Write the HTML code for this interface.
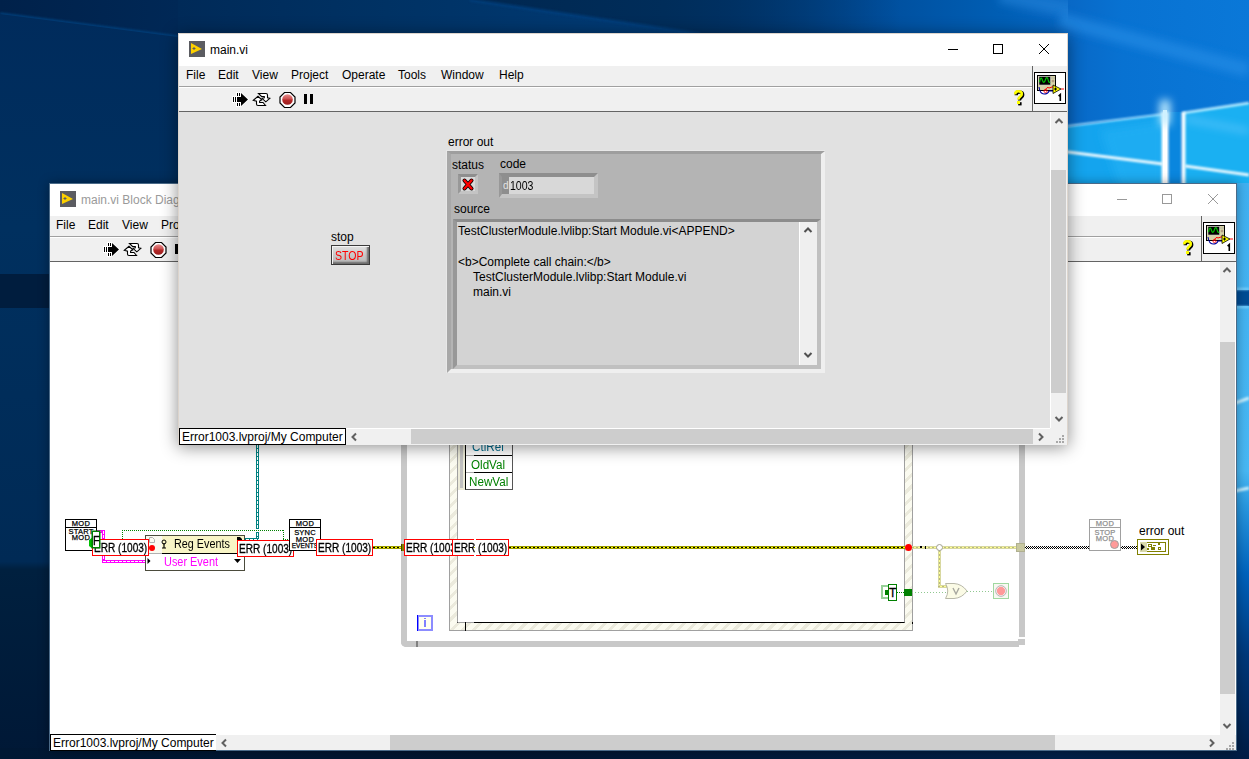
<!DOCTYPE html>
<html><head><meta charset="utf-8">
<style>
html,body{margin:0;padding:0}
body{width:1249px;height:759px;overflow:hidden;position:relative;font-family:"Liberation Sans",sans-serif;font-size:12px;color:#000;background:#002a58}
.a{position:absolute}
.t{position:absolute;white-space:nowrap;line-height:1;font-size:12px}
svg{position:absolute;overflow:visible}
</style></head><body>
<svg style="left:0;top:0" width="1249" height="759">
<defs>
<linearGradient id="dk0" x1="0" y1="0" x2="1249" y2="0" gradientUnits="userSpaceOnUse">
<stop offset="0" stop-color="#002550"/><stop offset=".25" stop-color="#002a58"/><stop offset=".58" stop-color="#003a78"/><stop offset=".7" stop-color="#004e9c"/><stop offset=".8" stop-color="#005eb4"/><stop offset=".86" stop-color="#0868c6"/><stop offset="1" stop-color="#0a72d4"/>
</linearGradient>
<linearGradient id="rcol" x1="0" y1="183" x2="0" y2="759" gradientUnits="userSpaceOnUse">
<stop offset="0" stop-color="#40b0f0"/><stop offset=".5" stop-color="#48b8f4"/><stop offset=".56" stop-color="#2898e0"/><stop offset=".68" stop-color="#0062bc"/><stop offset=".82" stop-color="#00387a"/><stop offset="1" stop-color="#001c44"/>
</linearGradient>
<linearGradient id="lcol" x1="0" y1="0" x2="0" y2="759" gradientUnits="userSpaceOnUse">
<stop offset="0" stop-color="#002b5c"/><stop offset=".3" stop-color="#00305f"/><stop offset=".74" stop-color="#002a55"/><stop offset=".75" stop-color="#00203f"/><stop offset="1" stop-color="#001836"/>
</linearGradient>
<linearGradient id="bot" x1="0" y1="0" x2="1249" y2="0" gradientUnits="userSpaceOnUse">
<stop offset="0" stop-color="#001834"/><stop offset=".4" stop-color="#001530"/><stop offset=".85" stop-color="#002048"/><stop offset="1" stop-color="#001c40"/>
</linearGradient>
<filter id="bl1" filterUnits="userSpaceOnUse" x="0" y="0" width="1249" height="759"><feGaussianBlur stdDeviation="1.2"/></filter>
<filter id="bl3" filterUnits="userSpaceOnUse" x="0" y="0" width="1249" height="759"><feGaussianBlur stdDeviation="4"/></filter>
<linearGradient id="tb0" x1="0" y1="0" x2="178" y2="0" gradientUnits="userSpaceOnUse"><stop offset="0" stop-color="#00214a"/><stop offset="1" stop-color="#002856"/></linearGradient>
<linearGradient id="tb1" x1="178" y1="0" x2="700" y2="0" gradientUnits="userSpaceOnUse"><stop offset="0" stop-color="#002a58"/><stop offset=".4" stop-color="#003264"/><stop offset="1" stop-color="#003c78"/></linearGradient>
<linearGradient id="tb2" x1="470" y1="0" x2="900" y2="0" gradientUnits="userSpaceOnUse"><stop offset="0" stop-color="#002750"/><stop offset=".45" stop-color="#002d5a"/><stop offset="1" stop-color="#002d5a" stop-opacity="0"/></linearGradient>
<linearGradient id="trr" x1="1068" y1="0" x2="1249" y2="0" gradientUnits="userSpaceOnUse"><stop offset="0" stop-color="#0868c6"/><stop offset=".3" stop-color="#0872d2"/><stop offset="1" stop-color="#0a78d8"/></linearGradient>
</defs>
<rect width="1249" height="759" fill="url(#dk0)"/>
<!-- top band -->
<path d="M178 0 H470 L700 34 H178 Z" fill="url(#tb1)"/>
<path d="M470 0 L700 34 H900 V0 Z" fill="url(#tb2)"/>
<path d="M470 0 L700 34" stroke="#00407e" stroke-width="3" filter="url(#bl1)" opacity=".8"/>
<path d="M1000 -5 L1249 45" stroke="#2a8ae0" stroke-width="16" filter="url(#bl3)" opacity=".5"/>
<!-- top-left ridge -->
<path d="M0 0 H178 V37 L0 14 Z" fill="url(#tb0)"/>
<path d="M0 14 L178 37" fill="none" stroke="#00407c" stroke-width="3" filter="url(#bl1)"/>
<!-- left column -->
<path d="M0 14 L178 37 V759 H0 Z" fill="url(#lcol)"/>

<rect x="0" y="274" width="49" height="34" fill="#001d3e"/>
<!-- bottom -->
<rect x="0" y="748" width="1249" height="11" fill="url(#bot)"/>
<!-- top right: windows logo area -->
<path d="M1068 0 H1249 V183 H1068 Z" fill="url(#trr)"/>

<path d="M1060 20 L1249 70" stroke="#2a90e8" stroke-width="14" filter="url(#bl3)" opacity=".6"/>
<!-- left pane -->
<path d="M1060 128 L1165 114 L1165 190 L1060 190 Z" fill="#14a4ee"/>
<path d="M1100 130 L1165 120 L1165 190 L1120 190 Z" fill="#20b0f4" opacity=".7" filter="url(#bl3)"/>
<path d="M1060 127 L1165 114" stroke="#a0e0ff" stroke-width="2" filter="url(#bl1)"/>
<path d="M1060 151 L1163 164" stroke="#e8f8ff" stroke-width="3" filter="url(#bl1)"/>
<!-- gap -->
<rect x="1169" y="112" width="12" height="80" fill="#0a86de"/>
<!-- right pane -->
<path d="M1183 113 L1249 103 L1249 190 L1183 190 Z" fill="#1ab0f2"/>
<path d="M1183 113 L1249 103" stroke="#b8ecff" stroke-width="2.5" filter="url(#bl1)"/>
<path d="M1185 119 L1249 131" stroke="#70ccff" stroke-width="3" filter="url(#bl3)"/>
<path d="M1185 166 L1249 175" stroke="#e8f8ff" stroke-width="3" filter="url(#bl1)"/>
<!-- beams -->
<path d="M1165 112 V192" stroke="#f4fcff" stroke-width="7" filter="url(#bl1)"/>
<path d="M1165 110 V192" stroke="#ffffff" stroke-width="4"/>
<path d="M1183.5 112 V192" stroke="#f4fcff" stroke-width="4" filter="url(#bl1)"/>
<path d="M1165 100 V125" stroke="#c0ecff" stroke-width="10" filter="url(#bl3)"/>
<!-- right column -->
<rect x="1230" y="183" width="19" height="576" fill="url(#rcol)"/>
<rect x="1230" y="290" width="19" height="16" fill="#004c94"/>
<path d="M1230 289 H1249" stroke="#80d4ff" stroke-width="2" filter="url(#bl1)"/>
<path d="M1230 307 H1249" stroke="#80d4ff" stroke-width="2" filter="url(#bl1)"/>
<path d="M1230 405 L1249 398" stroke="#c8f0ff" stroke-width="3" filter="url(#bl1)"/>
<path d="M1230 492 L1249 488" stroke="#c8f0ff" stroke-width="3" filter="url(#bl1)"/>
</svg>
<!-- ================= BLOCK DIAGRAM WINDOW ================= -->
<div class="a" style="left:49px;top:183px;width:1188px;height:568px;background:#fff;box-shadow:0 0 10px rgba(0,0,0,.35);border:1px solid #4a6a88;box-sizing:border-box"></div>
<svg style="left:60px;top:191px" width="16" height="16"><rect width="16" height="16" fill="#5b5c61"/><path d="M2 2 L13 8 L2 13 Z" fill="#fcd000"/><path d="M5 6v3M3.5 7.5h3" stroke="#5b5c61" stroke-width="1"/></svg>
<div class="t" style="left:81px;top:194px;color:#9a9a9a">main.vi Block Diagram</div>
<div class="a" style="left:1117px;top:199px;width:10px;height:1px;background:#999"></div>
<div class="a" style="left:1162px;top:194px;width:10px;height:10px;border:1px solid #999;box-sizing:border-box"></div>
<svg style="left:1208px;top:194px" width="10" height="10"><path d="M0 0L10 10M10 0L0 10" stroke="#999" stroke-width="1"/></svg>
<div class="a" style="left:50px;top:216px;width:1186px;height:20px;background:#f0f0f0"></div>
<div class="t" style="left:56px;top:219px">File</div>
<div class="t" style="left:88px;top:219px">Edit</div>
<div class="t" style="left:122px;top:219px">View</div>
<div class="t" style="left:161px;top:219px">Project</div>
<div class="a" style="left:50px;top:236px;width:1151px;height:1px;background:#a0a0a0"></div>
<div class="a" style="left:50px;top:237px;width:1151px;height:24px;background:#f0f0f0;border-top:1px solid #fff;box-sizing:border-box"></div>
<div class="a" style="left:50px;top:261px;width:1186px;height:1px;background:#646464"></div>
<div class="a" style="left:1201px;top:216px;width:35px;height:45px;background:#f0f0f0;border-left:1px solid #646464;box-sizing:border-box"></div>
<svg style="left:0;top:0" width="1" height="1"><defs><linearGradient id="rgb" x1="0" y1="0" x2="0" y2="1"><stop offset="0" stop-color="#e89090"/><stop offset=".45" stop-color="#cc5050"/><stop offset=".55" stop-color="#b52828"/><stop offset="1" stop-color="#9a2020"/></linearGradient></defs>
<g transform="translate(-129,150)">
<path d="M232 96h5v7h-5zM236 92h5v15h-5z" fill="#fff"/>
<path d="M240 91.5L249.5 99.5L240 107.5z" fill="#fff"/>
<g fill="#000"><rect x="233" y="97" width="1" height="5"/><rect x="235" y="97" width="1" height="5"/>
<rect x="237" y="93" width="1" height="3"/><rect x="239" y="93" width="1" height="3"/>
<rect x="237" y="103" width="1" height="3"/><rect x="239" y="103" width="1" height="3"/>
<rect x="237" y="97" width="4" height="5"/>
<path d="M241 93L248 99.5L241 106z"/></g>
<path d="M258.5 93.5L266 93.5Q267.5 93.5 267.5 95L267.5 97.8L269.8 98.3L265.8 101.8L262 98.3L264.3 97.8L264.3 96.5L261.5 96.5Z" fill="#fff" stroke="#000" stroke-width="1.1" stroke-linejoin="miter"/>
<path d="M265.5 105.5L258 105.5Q256.5 105.5 256.5 104L256.5 101.2L253.3 100.3L258 96.3L261.8 99.8L259.6 101L259.6 102.5L263 102.5Z" fill="#fff" stroke="#000" stroke-width="1.1" stroke-linejoin="miter"/>
<path d="M284.5 92.5h6l4.5 4.5v6l-4.5 4.5h-6l-4.5-4.5v-6z" fill="#fff" stroke="#000" stroke-width="1.2"/>
<circle cx="287.5" cy="99.5" r="5.3" fill="url(#rgb)"/>
<rect x="304" y="94" width="3" height="10" fill="#000"/><rect x="310" y="94" width="3" height="10" fill="#000"/>
</g></svg><svg style="left:1182px;top:240px" width="12" height="16"><g transform="translate(1,1)"><path d="M2.2 4.2 Q2.2 1.2 5.5 1.2 Q8.8 1.2 8.8 4 Q8.8 5.6 6.8 7 Q5.5 8 5.5 9.5" fill="none" stroke="#000" stroke-width="3.2"/><rect x="4.2" y="11.2" width="3.4" height="3.2" fill="#000"/></g><path d="M2.2 4.2 Q2.2 1.2 5.5 1.2 Q8.8 1.2 8.8 4 Q8.8 5.6 6.8 7 Q5.5 8 5.5 9.5" fill="none" stroke="#e8e800" stroke-width="2.6"/><path d="M2.2 4.2 Q2.2 1.2 5.5 1.2 Q8.8 1.2 8.8 4 Q8.8 5.6 6.8 7 Q5.5 8 5.5 9.5" fill="none" stroke="#ffff00" stroke-width="1.8"/><rect x="4" y="11" width="3" height="3" fill="#ffff00"/></svg><svg style="left:1203px;top:222px" width="32" height="32">
<rect x="0.5" y="0.5" width="31" height="31" fill="#fff" stroke="#000" stroke-width="1"/>
<rect x="3.5" y="3.5" width="18" height="15" fill="#d6d3a8" stroke="#000" stroke-width="1"/>
<rect x="5" y="4.5" width="11.5" height="8.5" fill="#000" stroke="#c8c8c8" stroke-width=".6"/>
<path d="M5.5 10 Q7 3 8.5 8.5 Q10 12.5 11.5 7.5 Q13 3 14.5 9 Q15 11 16 10" fill="none" stroke="#00c000" stroke-width="1.2"/>
<circle cx="19" cy="9" r="1" fill="#e0b080" stroke="#777" stroke-width=".5"/><path d="M18 5v2M20 5v2" stroke="#999" stroke-width=".6"/>
<path d="M5 15 Q6 22 10 22 Q14 22 15 19 L20 19" fill="none" stroke="#0000a0" stroke-width="1.1"/>
<path d="M11 19 Q13 14 15 16 L18 15 L20 14.5" fill="none" stroke="#ff0000" stroke-width="1"/>
<circle cx="11.5" cy="19" r="1.6" fill="none" stroke="#ff0000" stroke-width=".8"/>
<path d="M19 13 L27 17 L19 21.5 Z" fill="#ffff00" stroke="#000" stroke-width=".8"/>
<path d="M27 17h3" stroke="#ff0000" stroke-width="1"/>
<path d="M21.5 15.5v3M20 17h3" stroke="#000" stroke-width="1"/>
<path d="M24.6 24.2 L26.3 22.6 L26.3 29" fill="none" stroke="#000" stroke-width="1.6"/>
</svg>
<div class="a" style="left:1220px;top:262px;width:15px;height:473px;background:#f0f0f0"></div>
<div class="a" style="left:1220px;top:342px;width:15px;height:352px;background:#cdcdcd"></div>
<div class="a" style="left:50px;top:735px;width:1186px;height:15px;background:#f0f0f0"></div>
<div class="a" style="left:390px;top:735px;width:665px;height:15px;background:#cdcdcd"></div>
<div class="a" style="left:50px;top:734px;width:166px;height:17px;background:#fff;border:1px solid #000;border-right:none;box-sizing:border-box"></div>
<div class="t" style="left:53px;top:737px">Error1003.lvproj/My Computer</div>
<!-- ===== BD content ===== -->
<!-- while loop -->
<div class="a" style="left:401px;top:440px;width:6px;height:207px;background:#c8c8c8;border-bottom-left-radius:5px"></div>
<div class="a" style="left:401px;top:641px;width:618px;height:6px;background:#c8c8c8;border-bottom-left-radius:5px"></div>
<div class="a" style="left:1018px;top:639px;width:7px;height:6px;background:#c8c8c8"></div>
<div class="a" style="left:1019px;top:440px;width:6px;height:197px;background:#c8c8c8"></div>
<div class="a" style="left:416px;top:641px;width:2px;height:6px;background:#808080"></div>
<!-- iteration terminal -->
<div class="a" style="left:417px;top:615px;width:16px;height:16px;box-sizing:border-box;background:#fffff0;border:2px solid #8c8cff;box-shadow:inset 0 0 0 0 #000"></div>
<div class="a" style="left:417px;top:615px;width:1px;height:16px;background:#0000ff"></div>
<div class="a" style="left:424px;top:620px;width:2px;height:7px;background:#8080ff"></div>
<div class="a" style="left:424px;top:618px;width:2px;height:1px;background:#8080ff"></div>
<!-- event structure frame -->
<div class="a" style="left:449px;top:440px;width:464px;height:191px;box-sizing:border-box;border:1px solid #a0a0a0;background:repeating-linear-gradient(135deg,#fbfbf0 0px,#fbfbf0 5px,#ebeadc 5px,#ebeadc 8px)"></div>
<div class="a" style="left:457px;top:440px;width:448px;height:183px;box-sizing:border-box;background:#fff;border-right:1px solid #a0a0a0;border-bottom:1px solid #000;border-left:1px solid #a0a0a0"></div>
<div class="a" style="left:458px;top:622px;width:16px;height:1px;background:#a0a0a0"></div>
<div class="a" style="left:465px;top:622px;width:1px;height:9px;background:#000"></div>
<div class="a" style="left:912px;top:622px;width:1px;height:2px;background:#000"></div>
<!-- event data node -->
<div class="a" style="left:458px;top:440px;width:8px;height:50px;background:#ecebd8"></div>
<div class="a" style="left:460px;top:440px;width:3px;height:48px;background:#c0c0c0"></div>
<div class="a" style="left:465px;top:440px;width:48px;height:50px;box-sizing:border-box;background:#fff;border-left:1px solid #000;border-right:1px solid #555;border-bottom:1px solid #555"></div>
<div class="a" style="left:466px;top:455px;width:8px;height:1px;background:#aaa"></div>
<div class="a" style="left:474px;top:455px;width:38px;height:1px;background:#000"></div>
<div class="a" style="left:466px;top:472px;width:8px;height:1px;background:#aaa"></div>
<div class="a" style="left:474px;top:472px;width:38px;height:1px;background:#000"></div>
<div class="t" style="left:472px;top:441px;color:#006a8a;transform:scaleX(.97);transform-origin:0 0">CtlRef</div>
<div class="t" style="left:471px;top:459px;color:#008000;transform:scaleX(.97);transform-origin:0 0">OldVal</div>
<div class="t" style="left:469px;top:476px;color:#008000;transform:scaleX(.97);transform-origin:0 0">NewVal</div>

<!-- wires -->
<!-- teal refnum wire -->
<div class="a" style="left:256px;top:440px;width:3px;height:89px;background:repeating-linear-gradient(180deg,#008080 0,#008080 1px,#fff 1px,#fff 4px);border-left:1px solid #008080;border-right:1px solid #008080;box-sizing:border-box"></div>
<div class="a" style="left:256px;top:532px;width:3px;height:8px;background:repeating-linear-gradient(180deg,#008080 0,#008080 1px,#fff 1px,#fff 4px);border-left:1px solid #008080;border-right:1px solid #008080;box-sizing:border-box"></div>
<div class="a" style="left:245px;top:538px;width:14px;height:3px;background:repeating-linear-gradient(90deg,#008080 0,#008080 1px,#fff 1px,#fff 4px);border-top:1px solid #008080;border-bottom:1px solid #008080;box-sizing:border-box"></div>
<!-- green dotted boolean wire -->
<div class="a" style="left:122px;top:530px;width:162px;height:1px;background:repeating-linear-gradient(90deg,#008000 0,#008000 1px,transparent 1px,transparent 2px)"></div>
<div class="a" style="left:122px;top:530px;width:1px;height:9px;background:repeating-linear-gradient(180deg,#008000 0,#008000 1px,transparent 1px,transparent 2px)"></div>
<div class="a" style="left:283px;top:530px;width:1px;height:10px;background:repeating-linear-gradient(180deg,#008000 0,#008000 1px,transparent 1px,transparent 2px)"></div>
<div class="a" style="left:283px;top:539px;width:6px;height:1px;background:repeating-linear-gradient(90deg,#008000 0,#008000 1px,transparent 1px,transparent 2px)"></div>
<!-- magenta user event wire -->
<div class="a" style="left:102px;top:555px;width:3px;height:8px;background:repeating-linear-gradient(180deg,#ff00ff 0,#ff00ff 1px,#fff 1px,#fff 4px);border-left:1px solid #ff00ff;border-right:1px solid #ff00ff;box-sizing:border-box"></div>
<div class="a" style="left:102px;top:560px;width:44px;height:3px;background:repeating-linear-gradient(90deg,#ff00ff 0,#ff00ff 1px,#fff 1px,#fff 4px);border-top:1px solid #ff00ff;border-bottom:1px solid #ff00ff;box-sizing:border-box"></div>
<!-- error wire -->
<div class="a" style="left:373px;top:546px;width:29px;height:3px;box-sizing:border-box;border-top:1px solid #9a9a00;border-bottom:1px solid #9a9a00;background:repeating-linear-gradient(90deg,#000 0,#000 2px,#ffff00 2px,#ffff00 4px)"></div>
<div class="a" style="left:401px;top:544px;width:3px;height:7px;background:#808000;border-left:1px solid #404000;box-sizing:border-box"></div>
<div class="a" style="left:509px;top:546px;width:396px;height:3px;box-sizing:border-box;border-top:1px solid #9a9a00;border-bottom:1px solid #9a9a00;background:repeating-linear-gradient(90deg,#000 0,#000 2px,#ffff00 2px,#ffff00 4px)"></div>
<div class="a" style="left:905px;top:544px;width:7px;height:7px;background:#ff0000;border-radius:50%"></div>
<div class="a" style="left:912px;top:546px;width:104px;height:3px;box-sizing:border-box;border-top:1px solid #d8d8a0;border-bottom:1px solid #d8d8a0;background:repeating-linear-gradient(90deg,#b8b880 0,#b8b880 2px,#ffff90 2px,#ffff90 4px)"></div>
<div class="a" style="left:920px;top:546px;width:2px;height:2px;background:#000"></div>
<div class="a" style="left:925px;top:546px;width:1px;height:3px;background:#000"></div>
<div class="a" style="left:938px;top:546px;width:3px;height:42px;box-sizing:border-box;border-left:1px solid #d8d8a0;border-right:1px solid #d8d8a0;background:repeating-linear-gradient(180deg,#b8b880 0,#b8b880 2px,#ffff90 2px,#ffff90 4px)"></div>
<div class="a" style="left:938px;top:585px;width:11px;height:3px;box-sizing:border-box;border-top:1px solid #d8d8a0;border-bottom:1px solid #d8d8a0;background:repeating-linear-gradient(90deg,#b8b880 0,#b8b880 2px,#ffff90 2px,#ffff90 4px)"></div>
<div class="a" style="left:936px;top:544px;width:5px;height:5px;border:1px solid #a0a090;border-radius:50%;background:#fff"></div>
<div class="a" style="left:1016px;top:543px;width:9px;height:9px;box-sizing:border-box;background:#c8c8a0;border:1px solid #b0b090"></div>
<div class="a" style="left:1025px;top:546px;width:64px;height:3px;background:repeating-linear-gradient(90deg,#fff 0,#fff 1px,#000 1px,#000 2px)"></div>
<div class="a" style="left:1025px;top:547px;width:64px;height:1px;background:repeating-linear-gradient(90deg,#000 0,#000 1px,#fff 1px,#fff 2px)"></div>
<div class="a" style="left:1121px;top:546px;width:16px;height:3px;background:repeating-linear-gradient(90deg,#fff 0,#fff 1px,#000 1px,#000 2px)"></div>
<div class="a" style="left:1121px;top:547px;width:16px;height:1px;background:repeating-linear-gradient(90deg,#000 0,#000 1px,#fff 1px,#fff 2px)"></div>
<!-- boolean wires pale -->
<div class="a" style="left:897px;top:592px;width:8px;height:1px;background:repeating-linear-gradient(90deg,#008000 0,#008000 1px,transparent 1px,transparent 2px)"></div>
<div class="a" style="left:904px;top:589px;width:8px;height:7px;background:#008000"></div>
<div class="a" style="left:912px;top:592px;width:34px;height:1px;background:repeating-linear-gradient(90deg,#90c890 0,#90c890 1px,transparent 1px,transparent 3px)"></div>
<div class="a" style="left:967px;top:591px;width:26px;height:1px;background:repeating-linear-gradient(90deg,#90c890 0,#90c890 1px,transparent 1px,transparent 3px)"></div>
<!-- OR gate -->
<svg style="left:944px;top:582px" width="26" height="18"><path d="M1.5 1.5 L10 1.5 Q18 2 23 9 Q18 16 10 16.5 L1.5 16.5 Q6 9 1.5 1.5 Z" fill="#fbfbe6" stroke="#b8b8a8" stroke-width="1"/><path d="M9 6 L12 12 L15 6" fill="none" stroke="#a8a8a0" stroke-width="1.4"/></svg>
<!-- stop terminal -->
<div class="a" style="left:993px;top:583px;width:16px;height:16px;box-sizing:border-box;border:1px solid #a0d8a0;background:#f8f8f2"></div>
<svg style="left:994px;top:584px" width="14" height="14"><circle cx="7" cy="7" r="5.3" fill="#fff" stroke="#a0a0a0" stroke-width=".8"/><circle cx="7" cy="7" r="4.2" fill="#ff9a9a"/></svg>
<!-- T constant -->
<div class="a" style="left:881px;top:585px;width:8px;height:14px;box-sizing:border-box;border:2px solid #98d098;border-right:none;background:#fff"></div>
<div class="a" style="left:885px;top:590px;width:4px;height:5px;background:#008000"></div>
<div class="a" style="left:888px;top:584px;width:9px;height:17px;box-sizing:border-box;border:1px solid #008000;background:#fff"></div>
<div class="t" style="left:889px;top:587px;-webkit-text-stroke:.3px #000">T</div>

<!-- Reg Events node -->
<div class="a" style="left:145px;top:535px;width:100px;height:36px;box-sizing:border-box;border:1px solid #4b4b3c;background:#fff"></div>
<div class="a" style="left:146px;top:536px;width:16px;height:17px;background:#fafaf0"></div>
<div class="a" style="left:162px;top:536px;width:82px;height:17px;background:#f8f5c6"></div>
<div class="a" style="left:146px;top:553px;width:16px;height:1px;background:#b0b0b0"></div>
<div class="a" style="left:162px;top:553px;width:82px;height:1px;background:#000"></div>
<svg style="left:148px;top:536px" width="8" height="8"><path d="M1.5 1.5 H4.5 L6.5 3.5 V6.5 H1.5 Z" fill="none" stroke="#b0b0b0" stroke-width="1"/></svg>
<svg style="left:160px;top:539px" width="8" height="10"><circle cx="4" cy="3" r="2" fill="none" stroke="#000" stroke-width="1"/><path d="M4 4v5M2 9h4" stroke="#000" stroke-width="1.2"/></svg>
<svg style="left:236px;top:536px" width="8" height="6"><path d="M1 1 H4 L6 3 V5 H1 Z" fill="#000"/></svg>
<div class="t" style="left:174px;top:538px;transform:scaleX(.9);transform-origin:0 0">Reg Events</div>
<div class="t" style="left:164px;top:556px;color:#ff00ff;transform:scaleX(.91);transform-origin:0 0">User Event</div>
<svg style="left:146px;top:557px" width="6" height="8"><path d="M1.5 1 L4.5 4 L1.5 7 Z" fill="#000"/></svg>
<svg style="left:233px;top:558px" width="9" height="6"><path d="M1 1 H8 L4.5 5 Z" fill="#000"/></svg>
<!-- MOD START MOD -->
<div class="a" style="left:65px;top:519px;width:32px;height:32px;box-sizing:border-box;border:1px solid #000;background:#fff"></div>
<div class="a" style="left:66px;top:527px;width:30px;height:1px;background:#000"></div>
<div class="t" style="left:66px;top:520px;width:30px;text-align:center;font-size:7.5px;letter-spacing:.4px;-webkit-text-stroke:.25px">MOD</div>
<div class="t" style="left:66px;top:528px;width:30px;text-align:center;font-size:7.5px;letter-spacing:.2px;-webkit-text-stroke:.25px">START</div>
<div class="t" style="left:66px;top:534px;width:30px;text-align:center;font-size:7.5px;letter-spacing:.4px;-webkit-text-stroke:.25px">MOD</div>
<svg style="left:88px;top:536px" width="6" height="14"><path d="M1 4 L5 1 L5 13 L1 10 Z" fill="#00c000"/></svg>
<!-- ERR box 1 -->
<div class="a" style="left:92px;top:539px;width:57px;height:17px;box-sizing:border-box;border:1px solid #ff0000;background:#fff;overflow:hidden"><div class="t" style="left:1px;top:2px;transform:scaleX(.84);transform-origin:0 0;-webkit-text-stroke:.3px #000">ERR (1003)</div></div>
<div class="a" style="left:149px;top:545px;width:6px;height:6px;background:#ff0000;border-radius:50%"></div>
<!-- magenta top segment -->
<div class="a" style="left:97px;top:530px;width:8px;height:3px;background:repeating-linear-gradient(90deg,#ff00ff 0,#ff00ff 1px,#fff 1px,#fff 4px);border-top:1px solid #ff00ff;border-bottom:1px solid #ff00ff;box-sizing:border-box"></div>
<div class="a" style="left:102px;top:530px;width:3px;height:9px;background:repeating-linear-gradient(180deg,#ff00ff 0,#ff00ff 1px,#fff 1px,#fff 4px);border-left:1px solid #ff00ff;border-right:1px solid #ff00ff;box-sizing:border-box"></div>
<!-- F constant -->
<div class="a" style="left:92px;top:531px;width:8px;height:17px;box-sizing:border-box;border:1px solid #008000;background:#fff;box-shadow:0 0 0 .5px #008000"></div>
<div class="t" style="left:93px;top:535px;transform:scaleX(.9);transform-origin:0 0;-webkit-text-stroke:.3px #000">F</div>
<!-- ERR box 2 -->
<div class="a" style="left:237px;top:540px;width:57px;height:17px;box-sizing:border-box;border:1px solid #ff0000;background:#fff;overflow:hidden"><div class="t" style="left:1px;top:2px;transform:scaleX(.84);transform-origin:0 0;-webkit-text-stroke:.3px #000">ERR (1003)</div></div>

<!-- MOD SYNC node -->
<div class="a" style="left:289px;top:519px;width:32px;height:32px;box-sizing:border-box;border:1px solid #000;background:#fff"></div>
<div class="a" style="left:290px;top:527px;width:30px;height:1px;background:#000"></div>
<div class="t" style="left:290px;top:520px;width:30px;text-align:center;font-size:7.5px;letter-spacing:.4px;-webkit-text-stroke:.25px">MOD</div>
<div class="t" style="left:290px;top:529px;width:30px;text-align:center;font-size:7.5px;letter-spacing:.2px;-webkit-text-stroke:.25px">SYNC</div>
<div class="t" style="left:290px;top:536px;width:30px;text-align:center;font-size:7.5px;letter-spacing:.4px;-webkit-text-stroke:.25px">MOD</div>
<div class="t" style="left:289px;top:543px;width:32px;text-align:center;font-size:6.5px;letter-spacing:.1px;-webkit-text-stroke:.25px">EVENTS</div>
<!-- ERR box 3 -->
<div class="a" style="left:316px;top:539px;width:57px;height:17px;box-sizing:border-box;border:1px solid #ff0000;background:#fff;overflow:hidden"><div class="t" style="left:1px;top:2px;transform:scaleX(.84);transform-origin:0 0;-webkit-text-stroke:.3px #000">ERR (1003)</div></div>
<!-- ERR box 4,5 -->
<div class="a" style="left:404px;top:539px;width:49px;height:17px;box-sizing:border-box;border:1px solid #ff0000;border-right:none;background:#fff;overflow:hidden"><div class="t" style="left:1px;top:2px;transform:scaleX(.84);transform-origin:0 0;-webkit-text-stroke:.3px #000">ERR (1003)</div></div>
<div class="a" style="left:452px;top:539px;width:57px;height:17px;box-sizing:border-box;border:1px solid #ff0000;background:#fff;overflow:hidden"><div class="t" style="left:1px;top:2px;transform:scaleX(.84);transform-origin:0 0;-webkit-text-stroke:.3px #000">ERR (1003)</div></div>

<!-- MOD STOP MOD (grayed) -->
<div class="a" style="left:1089px;top:519px;width:32px;height:32px;box-sizing:border-box;border:1px solid #a0a0a0;background:#fff"></div>
<div class="a" style="left:1090px;top:527px;width:30px;height:1px;background:#a0a0a0"></div>
<div class="t" style="left:1090px;top:520px;width:30px;text-align:center;font-size:7.5px;letter-spacing:.4px;-webkit-text-stroke:.25px;color:#909090">MOD</div>
<div class="t" style="left:1090px;top:529px;width:30px;text-align:center;font-size:7.5px;letter-spacing:.2px;-webkit-text-stroke:.25px;color:#909090">STOP</div>
<div class="t" style="left:1090px;top:535px;width:30px;text-align:center;font-size:7.5px;letter-spacing:.4px;-webkit-text-stroke:.25px;color:#909090">MOD</div>
<div class="a" style="left:1110px;top:540px;width:9px;height:9px;box-sizing:border-box;border-radius:50%;background:#ff9a9a;border:1px solid #a0a0a0"></div>
<!-- error out indicator -->
<div class="t" style="left:1139px;top:525px">error out</div>
<div class="a" style="left:1137px;top:539px;width:32px;height:16px;box-sizing:border-box;border:1px solid #808000;background:#fff"></div>
<div class="a" style="left:1140px;top:542px;width:26px;height:10px;box-sizing:border-box;border:1px solid #808000;background:#fff"></div>
<div class="a" style="left:1140px;top:542px;width:7px;height:10px;background:#d8d8a8"></div>
<svg style="left:1140px;top:543px" width="6" height="8"><path d="M1 .5 L5 4 L1 7.5 Z" fill="#000"/></svg>
<div class="a" style="left:1148px;top:544px;width:3px;height:2px;border:1px solid #808000;box-sizing:content-box;width:2px;height:1px"></div>
<div class="a" style="left:1153px;top:545px;width:3px;height:1px;background:#808000"></div>
<div class="a" style="left:1158px;top:543px;width:2px;height:2px;background:#808000"></div>
<div class="a" style="left:1147px;top:548px;width:2px;height:2px;background:#808000"></div>
<div class="a" style="left:1151px;top:547px;width:4px;height:3px;background:#808000"></div>
<div class="a" style="left:1158px;top:547px;width:3px;height:3px;box-sizing:border-box;border:1px solid #808000"></div>

<!-- BD scroll arrows -->
<svg style="left:1222px;top:266px" width="10" height="8"><path d="M1.5 6L5 2.5L8.5 6" fill="none" stroke="#606060" stroke-width="2"/></svg>
<svg style="left:1222px;top:722px" width="10" height="8"><path d="M1.5 2L5 5.5L8.5 2" fill="none" stroke="#606060" stroke-width="2"/></svg>
<svg style="left:220px;top:738px" width="8" height="10"><path d="M6 1.5L2.5 5L6 8.5" fill="none" stroke="#606060" stroke-width="2"/></svg>
<svg style="left:1208px;top:738px" width="8" height="10"><path d="M2 1.5L5.5 5L2 8.5" fill="none" stroke="#606060" stroke-width="2"/></svg>
<div class="a" style="left:1232px;top:742px;width:2px;height:2px;background:#a8a8a8"></div>
<div class="a" style="left:1229px;top:745px;width:2px;height:2px;background:#a8a8a8"></div>
<div class="a" style="left:1232px;top:745px;width:2px;height:2px;background:#a8a8a8"></div>
<div class="a" style="left:1226px;top:748px;width:2px;height:2px;background:#a8a8a8"></div>
<div class="a" style="left:1229px;top:748px;width:2px;height:2px;background:#a8a8a8"></div>
<div class="a" style="left:1232px;top:748px;width:2px;height:2px;background:#a8a8a8"></div>
<div class="a" style="left:474px;top:539px;width:2px;height:1px;background:#fff"></div>
<div class="a" style="left:474px;top:555px;width:2px;height:1px;background:#fff"></div>
<div class="a" style="left:474px;top:546px;width:2px;height:3px;background:#fff"></div>
<div class="a" style="left:474px;top:547px;width:1px;height:1px;background:#c8c800"></div>
<!-- ================= FRONT PANEL WINDOW ================= -->
<div class="a" style="left:178px;top:33px;width:890px;height:412px;background:#fff;box-shadow:0 2px 16px rgba(0,0,0,.45);border:1px solid #dcd4cc;box-sizing:border-box"></div>
<svg style="left:189px;top:41px" width="16" height="16"><rect width="16" height="16" fill="#5b5c61"/><path d="M2 2 L13 8 L2 13 Z" fill="#fcd000"/><path d="M5 6v3M3.5 7.5h3" stroke="#5b5c61" stroke-width="1"/></svg>
<div class="t" style="left:210px;top:44px">main.vi</div>
<div class="a" style="left:948px;top:49px;width:10px;height:1px;background:#000"></div>
<div class="a" style="left:993px;top:44px;width:10px;height:10px;border:1px solid #000;box-sizing:border-box"></div>
<svg style="left:1039px;top:44px" width="10" height="10"><path d="M0 0L10 10M10 0L0 10" stroke="#000" stroke-width="1"/></svg>
<div class="a" style="left:179px;top:66px;width:888px;height:20px;background:#f0f0f0"></div>
<div class="t" style="left:186px;top:69px">File</div>
<div class="t" style="left:218px;top:69px">Edit</div>
<div class="t" style="left:252px;top:69px">View</div>
<div class="t" style="left:291px;top:69px">Project</div>
<div class="t" style="left:342px;top:69px">Operate</div>
<div class="t" style="left:398px;top:69px">Tools</div>
<div class="t" style="left:441px;top:69px">Window</div>
<div class="t" style="left:499px;top:69px">Help</div>
<div class="a" style="left:179px;top:86px;width:853px;height:1px;background:#a0a0a0"></div>
<div class="a" style="left:179px;top:87px;width:853px;height:24px;background:#f0f0f0;border-top:1px solid #fff;box-sizing:border-box"></div>
<div class="a" style="left:179px;top:111px;width:888px;height:1px;background:#646464"></div>
<div class="a" style="left:1032px;top:66px;width:35px;height:45px;background:#f0f0f0;border-left:1px solid #646464;box-sizing:border-box"></div>
<svg style="left:0;top:0" width="1" height="1"><defs><linearGradient id="rgf" x1="0" y1="0" x2="0" y2="1"><stop offset="0" stop-color="#e89090"/><stop offset=".45" stop-color="#cc5050"/><stop offset=".55" stop-color="#b52828"/><stop offset="1" stop-color="#9a2020"/></linearGradient></defs>
<g transform="translate(0,0)">
<path d="M232 96h5v7h-5zM236 92h5v15h-5z" fill="#fff"/>
<path d="M240 91.5L249.5 99.5L240 107.5z" fill="#fff"/>
<g fill="#000"><rect x="233" y="97" width="1" height="5"/><rect x="235" y="97" width="1" height="5"/>
<rect x="237" y="93" width="1" height="3"/><rect x="239" y="93" width="1" height="3"/>
<rect x="237" y="103" width="1" height="3"/><rect x="239" y="103" width="1" height="3"/>
<rect x="237" y="97" width="4" height="5"/>
<path d="M241 93L248 99.5L241 106z"/></g>
<path d="M258.5 93.5L266 93.5Q267.5 93.5 267.5 95L267.5 97.8L269.8 98.3L265.8 101.8L262 98.3L264.3 97.8L264.3 96.5L261.5 96.5Z" fill="#fff" stroke="#000" stroke-width="1.1" stroke-linejoin="miter"/>
<path d="M265.5 105.5L258 105.5Q256.5 105.5 256.5 104L256.5 101.2L253.3 100.3L258 96.3L261.8 99.8L259.6 101L259.6 102.5L263 102.5Z" fill="#fff" stroke="#000" stroke-width="1.1" stroke-linejoin="miter"/>
<path d="M284.5 92.5h6l4.5 4.5v6l-4.5 4.5h-6l-4.5-4.5v-6z" fill="#fff" stroke="#000" stroke-width="1.2"/>
<circle cx="287.5" cy="99.5" r="5.3" fill="url(#rgf)"/>
<rect x="304" y="94" width="3" height="10" fill="#000"/><rect x="310" y="94" width="3" height="10" fill="#000"/>
</g></svg><svg style="left:1013px;top:90px" width="12" height="16"><g transform="translate(1,1)"><path d="M2.2 4.2 Q2.2 1.2 5.5 1.2 Q8.8 1.2 8.8 4 Q8.8 5.6 6.8 7 Q5.5 8 5.5 9.5" fill="none" stroke="#000" stroke-width="3.2"/><rect x="4.2" y="11.2" width="3.4" height="3.2" fill="#000"/></g><path d="M2.2 4.2 Q2.2 1.2 5.5 1.2 Q8.8 1.2 8.8 4 Q8.8 5.6 6.8 7 Q5.5 8 5.5 9.5" fill="none" stroke="#e8e800" stroke-width="2.6"/><path d="M2.2 4.2 Q2.2 1.2 5.5 1.2 Q8.8 1.2 8.8 4 Q8.8 5.6 6.8 7 Q5.5 8 5.5 9.5" fill="none" stroke="#ffff00" stroke-width="1.8"/><rect x="4" y="11" width="3" height="3" fill="#ffff00"/></svg><svg style="left:1034px;top:72px" width="32" height="32">
<rect x="0.5" y="0.5" width="31" height="31" fill="#fff" stroke="#000" stroke-width="1"/>
<rect x="3.5" y="3.5" width="18" height="15" fill="#d6d3a8" stroke="#000" stroke-width="1"/>
<rect x="5" y="4.5" width="11.5" height="8.5" fill="#000" stroke="#c8c8c8" stroke-width=".6"/>
<path d="M5.5 10 Q7 3 8.5 8.5 Q10 12.5 11.5 7.5 Q13 3 14.5 9 Q15 11 16 10" fill="none" stroke="#00c000" stroke-width="1.2"/>
<circle cx="19" cy="9" r="1" fill="#e0b080" stroke="#777" stroke-width=".5"/><path d="M18 5v2M20 5v2" stroke="#999" stroke-width=".6"/>
<path d="M5 15 Q6 22 10 22 Q14 22 15 19 L20 19" fill="none" stroke="#0000a0" stroke-width="1.1"/>
<path d="M11 19 Q13 14 15 16 L18 15 L20 14.5" fill="none" stroke="#ff0000" stroke-width="1"/>
<circle cx="11.5" cy="19" r="1.6" fill="none" stroke="#ff0000" stroke-width=".8"/>
<path d="M19 13 L27 17 L19 21.5 Z" fill="#ffff00" stroke="#000" stroke-width=".8"/>
<path d="M27 17h3" stroke="#ff0000" stroke-width="1"/>
<path d="M21.5 15.5v3M20 17h3" stroke="#000" stroke-width="1"/>
<path d="M24.6 24.2 L26.3 22.6 L26.3 29" fill="none" stroke="#000" stroke-width="1.6"/>
</svg>
<div class="a" style="left:179px;top:112px;width:871px;height:316px;background:#e1e1e1"></div>
<div class="a" style="left:1050px;top:112px;width:1px;height:316px;background:#fff"></div>
<div class="a" style="left:1051px;top:112px;width:16px;height:316px;background:#f0f0f0"></div>
<div class="a" style="left:1051px;top:170px;width:15px;height:223px;background:#cdcdcd"></div>
<div class="a" style="left:179px;top:428px;width:888px;height:17px;background:#f0f0f0"></div>
<div class="a" style="left:411px;top:429px;width:622px;height:15px;background:#cdcdcd"></div>
<div class="a" style="left:346px;top:428px;width:704px;height:1px;background:#fff"></div>
<div class="a" style="left:179px;top:428px;width:167px;height:17px;background:#fff;border:1px solid #000;box-sizing:border-box"></div>
<div class="t" style="left:182px;top:431px">Error1003.lvproj/My Computer</div>
<!-- stop button -->
<div class="t" style="left:331px;top:231px">stop</div>
<div class="a" style="left:331px;top:245px;width:39px;height:20px;box-sizing:border-box;border:1px solid #3a3a3a;background:linear-gradient(180deg,#e0e0e0 0%,#c8c8c8 50%,#b8b8b8 100%);box-shadow:inset 1px 1px 0 #f4f4f4,inset -2px -2px 2px #6a6a6a"></div>
<div class="t" style="left:335px;top:250px;color:#ff0000;font-size:12px;transform:scaleX(.88);transform-origin:0 0">STOP</div>
<!-- error out cluster -->
<div class="t" style="left:448px;top:136px">error out</div>
<div class="a" style="left:446px;top:150px;width:379px;height:223px;background:#e8e8e8"></div>
<div class="a" style="left:447px;top:151px;width:378px;height:222px;box-sizing:border-box;background:#b4b4b4;border-style:solid;border-width:3px 4px 4px 4px;border-color:#9e9e9e #efefef #efefef #a8a8a8"></div>
<div class="t" style="left:452px;top:159px">status</div>
<div class="t" style="left:500px;top:158px">code</div>
<div class="a" style="left:458px;top:174px;width:20px;height:20px;box-sizing:border-box;background:#d9d9d9;border-style:solid;border-width:3px;border-color:#8e8e8e #c4c4c4 #c4c4c4 #989898"></div>
<svg style="left:462px;top:178px" width="12" height="13"><path d="M2.5 2.5L9.5 10.5M9.5 2.5L2.5 10.5" stroke="#000" stroke-width="4" stroke-linecap="round"/><path d="M2.5 2.5L9.5 10.5M9.5 2.5L2.5 10.5" stroke="#ff0000" stroke-width="2.4" stroke-linecap="round"/></svg>
<div class="a" style="left:499px;top:173px;width:99px;height:25px;box-sizing:border-box;background:#d8d8d8;border-style:solid;border-width:4px 4px 4px 3px;border-color:#8e8e8e #c4c4c4 #c4c4c4 #989898"></div>
<div class="a" style="left:502px;top:177px;width:7px;height:17px;background:#8e8e8e"></div>
<div class="t" style="left:503px;top:181px;color:#e4e4e4;font-size:10px">d</div>
<div class="t" style="left:510px;top:180px;transform:scaleX(.88);transform-origin:0 0">1003</div>
<div class="t" style="left:454px;top:203px">source</div>
<div class="a" style="left:453px;top:219px;width:368px;height:150px;box-sizing:border-box;background:#d3d3d3;border-style:solid;border-width:3px 4px 4px 4px;border-color:#8c8c8c #c0c0c0 #c0c0c0 #989898"></div>
<div class="a" style="left:799px;top:222px;width:18px;height:143px;box-sizing:border-box;background:#efefef;border-left:1px solid #fff"></div>
<svg style="left:803px;top:226px" width="10" height="8"><path d="M1.5 6L5 2.5L8.5 6" fill="none" stroke="#505050" stroke-width="2"/></svg>
<svg style="left:803px;top:351px" width="10" height="8"><path d="M1.5 2L5 5.5L8.5 2" fill="none" stroke="#505050" stroke-width="2"/></svg>
<div class="t" style="left:458px;top:225px">TestClusterModule.lvlibp:Start Module.vi&lt;APPEND&gt;</div>
<div class="t" style="left:458px;top:256px">&lt;b&gt;Complete call chain:&lt;/b&gt;</div>
<div class="t" style="left:473px;top:271px">TestClusterModule.lvlibp:Start Module.vi</div>
<div class="t" style="left:473px;top:286px">main.vi</div>
<!-- FP scrollbar arrows -->
<svg style="left:1054px;top:117px" width="10" height="8"><path d="M1.5 6L5 2.5L8.5 6" fill="none" stroke="#606060" stroke-width="2"/></svg>
<svg style="left:1054px;top:415px" width="10" height="8"><path d="M1.5 2L5 5.5L8.5 2" fill="none" stroke="#606060" stroke-width="2"/></svg>
<svg style="left:350px;top:432px" width="8" height="10"><path d="M6 1.5L2.5 5L6 8.5" fill="none" stroke="#606060" stroke-width="2"/></svg>
<svg style="left:1037px;top:432px" width="8" height="10"><path d="M2 1.5L5.5 5L2 8.5" fill="none" stroke="#606060" stroke-width="2"/></svg>
<div class="a" style="left:1062px;top:435px;width:2px;height:2px;background:#a8a8a8"></div>
<div class="a" style="left:1059px;top:438px;width:2px;height:2px;background:#a8a8a8"></div>
<div class="a" style="left:1062px;top:438px;width:2px;height:2px;background:#a8a8a8"></div>
<div class="a" style="left:1056px;top:441px;width:2px;height:2px;background:#a8a8a8"></div>
<div class="a" style="left:1059px;top:441px;width:2px;height:2px;background:#a8a8a8"></div>
<div class="a" style="left:1062px;top:441px;width:2px;height:2px;background:#a8a8a8"></div>
</body></html>
